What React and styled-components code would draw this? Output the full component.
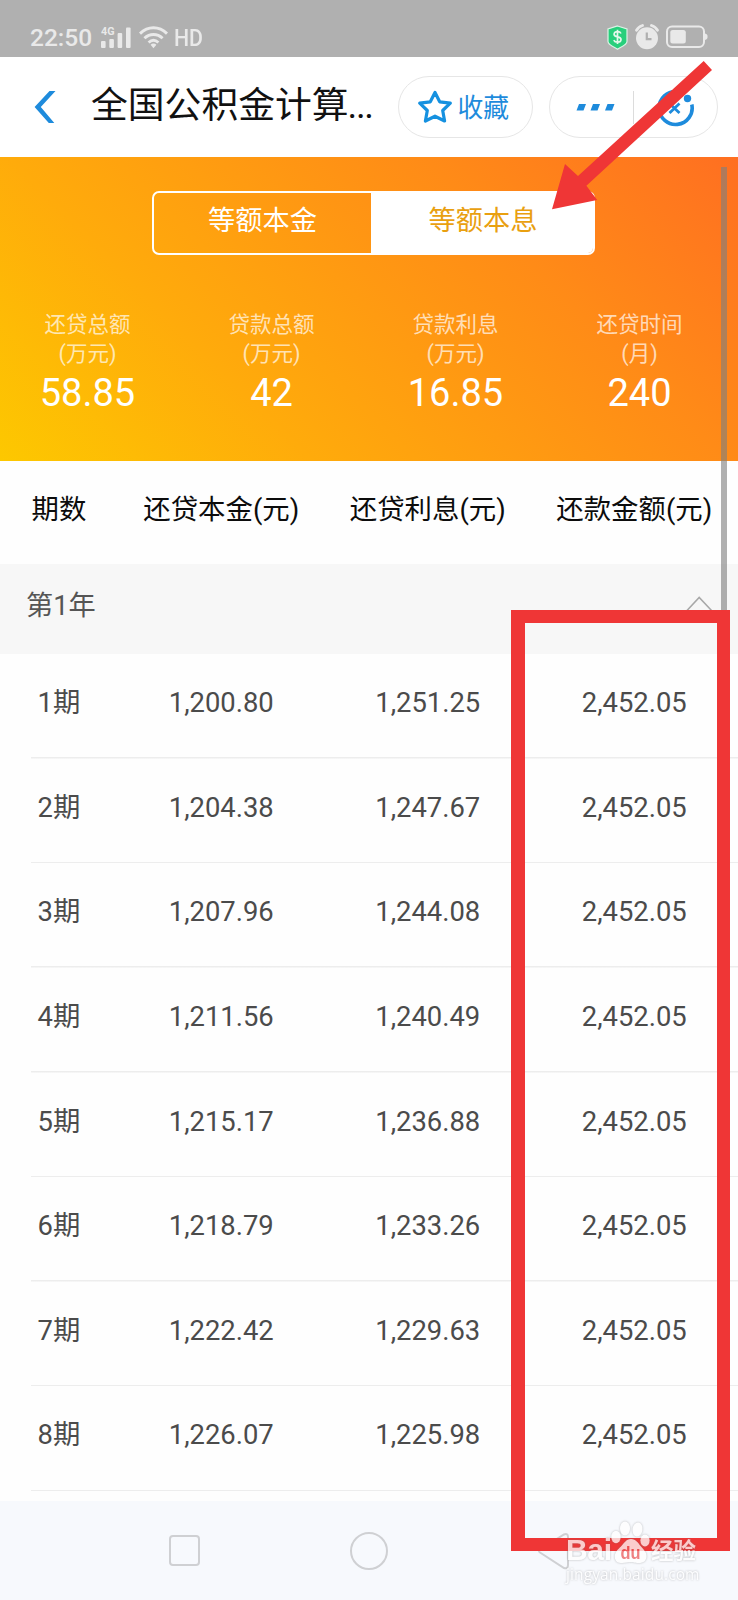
import React from "react";
import styled, { createGlobalStyle } from "styled-components";

const GlobalStyle = createGlobalStyle`
  * {
    box-sizing: border-box;
  }
  body {
    margin: 0;
    background: #fefefe;
    font-family: Roboto, "Noto Sans CJK SC", sans-serif;
  }
  svg {
    display: block;
    flex: none;
  }
`;

const Screen = styled.div`
  position: relative;
  display: flex;
  flex-direction: column;
  width: 738px;
  height: 1600px;
  overflow: hidden;
  background: #fefefe;
`;

const StatusBar = styled.div`
  display: flex;
  justify-content: space-between;
  height: 57px;
  padding: 20px 30px 0 30px;
  background: #b0b0b0;
  color: #e9e9e9;
`;

const StatusGroup = styled.div`
  display: flex;
  align-items: center;
  height: 34px;
  gap: ${(props) => props.$gap}px;
`;

const Clock = styled.span`
  padding-top: 2px;
  font-size: 24.5px;
  font-weight: 500;
  line-height: 34px;
  width: 63px;
  white-space: nowrap;
`;

const Network = styled.span`
  margin-left: -2px;
  padding-top: 2px;
  font-size: 24.5px;
  font-weight: 500;
  line-height: 34px;
  transform: scaleX(0.87);
  transform-origin: left;
`;

const NavBar = styled.div`
  display: flex;
  align-items: center;
  height: 100px;
  padding: 0 20px 0 32px;
  background: #fff;
`;

const Title = styled.h1`
  width: 308px;
  margin: 0 0 0 33px;
  padding-bottom: 2px;
  font-size: 36.8px;
  font-weight: 400;
  line-height: 50px;
  color: #111;
  white-space: nowrap;
`;

const Dots = styled.span`
  margin-left: -1px;
  letter-spacing: -1.4px;
`;

const Pill = styled.div`
  display: flex;
  align-items: center;
  width: ${(props) => props.$width}px;
  height: 62px;
  padding-left: ${(props) => props.$inset}px;
  border: 1px solid #e6e6e6;
  border-radius: 31px;
  background: #fff;
  color: #1e8bdc;
  font-size: 25.8px;
`;

const MenuPill = styled(Pill)`
  margin-left: 16px;
`;

const PillText = styled.span`
  margin: 2px 0 0 4px;
  line-height: 36px;
`;

const PillDivider = styled.span`
  width: 1px;
  height: 33px;
  margin: 0 23px 0 18px;
  background: #dcdcdc;
`;

const Summary = styled.section`
  height: 304px;
  padding-top: 34px;
  background: linear-gradient(45deg, #fdc800 0%, #ffab0b 30%, #ff8b17 70%, #ff6f21 100%);
`;

const Tabs = styled.div`
  display: flex;
  width: 442.5px;
  height: 63.5px;
  margin-left: 152px;
  border: 2px solid #fff;
  border-radius: 7px;
  overflow: hidden;
`;

const Tab = styled.div`
  flex: 1 0 ${(props) => (props.$active ? 222 : 217)}px;
  padding-left: ${(props) => (props.$active ? 2 : 0)}px;
  text-align: center;
  font-size: 27.2px;
  line-height: 57px;
  color: ${(props) => (props.$active ? "#e9a010" : "#fff")};
  background: ${(props) => (props.$active ? "#fff" : "transparent")};
`;

const Totals = styled.div`
  display: grid;
  grid-template-columns: repeat(4, 184px);
  margin: 55.5px 0 0 -4.5px;
  text-align: center;
`;

const TotalLabel = styled.div`
  font-size: 21.5px;
  line-height: 29px;
  color: rgba(255, 255, 255, 0.7);
`;

const TotalValue = styled.div`
  font-size: 38px;
  line-height: 51px;
  color: #fff;
`;

const Row = styled.div`
  display: grid;
  grid-template-columns: 118px repeat(3, 206.5px);
  text-align: center;
  font-size: 27.4px;
`;

const HeadRow = styled(Row)`
  height: 103px;
  line-height: 99px;
  color: #0c0c0c;
`;

const YearBar = styled.div`
  display: flex;
  justify-content: space-between;
  height: 90px;
  padding: 0 24px 0 26px;
  background: #f7f7f7;
  color: #555;
  font-size: 27.2px;
  line-height: 85px;
`;

const ChevronBox = styled.div`
  padding-top: 32px;
`;

const PeriodRow = styled(Row)`
  height: 104.64px;
  line-height: 98px;
  color: #4b4b4b;
  background: linear-gradient(#ededed, #ededed) 31px 100% / 100% 1.5px no-repeat;
`;

const List = styled.div`
  height: 847px;
  overflow: hidden;
`;

const SystemNav = styled.div`
  display: flex;
  align-items: center;
  flex: 1;
  padding: 0 0 0 169px;
  background: #f7f9fd;
`;

const NavSquare = styled.div`
  width: 31px;
  height: 31px;
  border: 2px solid #cfd0d3;
  border-radius: 4px;
`;

const NavCircle = styled.div`
  width: 38px;
  height: 38px;
  margin: 0 149px 0 150px;
  border: 2px solid #cfd0d3;
  border-radius: 50%;
`;

const Scrollbar = styled.div`
  position: absolute;
  left: 721px;
  top: 167px;
  width: 6px;
  height: 450px;
  background: rgba(127, 127, 127, 0.62);
`;

const Frame = styled.div`
  position: absolute;
  left: 511px;
  top: 610px;
  width: 219px;
  height: 941px;
  border: solid #ef3636;
  border-width: 13px 13px 13px 14px;
`;

const Arrow = styled.svg`
  position: absolute;
  left: 540px;
  top: 50px;
`;

const Watermark = styled.div`
  position: absolute;
  left: 566px;
  top: 1519px;
  color: #fff;
  opacity: 0.75;
  filter: drop-shadow(0 0 0.8px rgba(110, 110, 110, 0.6));
`;

const Brand = styled.div`
  display: flex;
  align-items: flex-end;
  height: 46px;
  font-family: "Liberation Sans", "Noto Sans CJK SC", sans-serif;
  font-weight: 700;
`;

const BrandLatin = styled.span`
  width: 45px;
  font-size: 30px;
  line-height: 30px;
  height: 30px;
  letter-spacing: -0.3px;
`;

const BrandHan = styled.span`
  margin-left: 1px;
  font-size: 22.5px;
  line-height: 26px;
`;

const Site = styled.div`
  font-family: "Open Sans", sans-serif;
  font-size: 15.5px;
  line-height: 18px;
  letter-spacing: 0.1px;
`;

const totals = [
  { label: "还贷总额", unit: "(万元)", value: "58.85" },
  { label: "贷款总额", unit: "(万元)", value: "42" },
  { label: "贷款利息", unit: "(万元)", value: "16.85" },
  { label: "还贷时间", unit: "(月)", value: "240" },
];

const periods = [
  ["1期", "1,200.80", "1,251.25", "2,452.05"],
  ["2期", "1,204.38", "1,247.67", "2,452.05"],
  ["3期", "1,207.96", "1,244.08", "2,452.05"],
  ["4期", "1,211.56", "1,240.49", "2,452.05"],
  ["5期", "1,215.17", "1,236.88", "2,452.05"],
  ["6期", "1,218.79", "1,233.26", "2,452.05"],
  ["7期", "1,222.42", "1,229.63", "2,452.05"],
  ["8期", "1,226.07", "1,225.98", "2,452.05"],
];

const SignalIcon = () => (
  <svg width="30" height="26" viewBox="0 -3 30 26" fill="currentColor">
    <text x="0" y="7.500" fontSize="10.500" fontWeight="700" textLength="13.500" lengthAdjust="spacingAndGlyphs">
      4G
    </text>
    <rect x="0" y="14" width="4.600" height="7" rx="1" />
    <rect x="8.300" y="12" width="4.600" height="9" rx="1" />
    <rect x="16.600" y="6" width="4.600" height="15" rx="1" />
    <rect x="25" y="0.500" width="4.600" height="20.500" rx="1" />
  </svg>
);

const WifiIcon = () => (
  <svg width="29" height="23" viewBox="0 0 29 23" fill="none" stroke="currentColor" strokeWidth="2.900">
    <path d="M1 7.600C9-.2 20-.2 28 7.600" />
    <path d="M5.400 12.200c5.400-5 12.800-5 18.200 0" />
    <path d="M9.600 16.500c3-2.700 6.800-2.700 9.800 0" />
    <path d="M11.600 18.800c1.600-1.600 4.200-1.600 5.800 0L14.500 22.300z" fill="currentColor" stroke="none" />
  </svg>
);

const ShieldIcon = () => (
  <svg width="21" height="25" viewBox="0 0 21 25">
    <path
      d="M10.500 1L20 4v12.500c0 3.500-6 5.500-9.500 7.700C7 22 1 20 1 16.500V4z"
      fill="#28cf7c"
      stroke="#dcf3e6"
      strokeWidth="1.200"
    />
    <path
      d="M14 8.500c-.6-1.300-1.800-1.900-3.500-1.900-2 0-3.400.9-3.400 2.600 0 3.800 6.900 1.700 6.900 5.300 0 1.800-1.500 2.700-3.500 2.700-1.800 0-3.100-.7-3.700-2.100M10.500 4.700v14.400"
      fill="none"
      stroke="#e4f8ec"
      strokeWidth="1.700"
    />
  </svg>
);

const AlarmIcon = () => (
  <svg width="24" height="26" viewBox="0 0 24 26" fill="none">
    <circle cx="12" cy="14.200" r="11" fill="currentColor" />
    <path d="M1.500 6.200C2.800 4 5 2.200 7.500 1.500M22.500 6.200C21.200 4 19 2.200 16.500 1.500" stroke="currentColor" strokeWidth="2.800" strokeLinecap="round" />
    <path d="M11.800 8.500v6.700h4.700" stroke="#b0b0b0" strokeWidth="2.200" />
  </svg>
);

const BatteryIcon = () => (
  <svg width="42" height="24" viewBox="0 0 42 24">
    <rect x="1" y="1.500" width="37" height="20.500" rx="5" fill="none" stroke="currentColor" strokeWidth="2" />
    <rect x="4.300" y="5" width="15.500" height="13.500" rx="2.500" fill="currentColor" />
    <path d="M39 8.500q3 1 2.500 3.200q.3 2.500-2.500 3.300z" fill="currentColor" />
  </svg>
);

const BackIcon = () => (
  <svg width="26" height="34" viewBox="0 0 26 34">
    <path d="M17.500 1H23.500L8.800 17 22.300 33H16.800L2.600 17z" fill="#1e8bdc" />
  </svg>
);

const StarIcon = () => (
  <svg width="36" height="34" viewBox="0 0 36 34">
    <path
      d="M18 2.500L22.700 11.800 33.300 13.200 25.700 20.500 27.600 31 18 26.200 8.400 31 10.300 20.500 2.700 13.200 13.300 11.800z"
      fill="none"
      stroke="#1591e0"
      strokeWidth="3.200"
      strokeLinejoin="round"
    />
  </svg>
);

const MoreIcon = () => (
  <svg width="39" height="7" viewBox="0 0 39 7" fill="#1e8bdc">
    <path d="M3 0H10L7.500 6.500H.5zM17 0h7l-2.500 6.500h-7zM31.500 0h7L36 6.500h-7z" />
  </svg>
);

const FaceIcon = () => (
  <svg width="38" height="40" viewBox="0 0 38 40" fill="none" stroke="#1e8bdc">
    <path d="M20 4.500A16.500 16.500 0 1 0 34.800 17.500" strokeWidth="3.600" />
    <circle cx="30.500" cy="11.500" r="3.700" fill="#1e8bdc" stroke="none" />
    <path d="M12.500 16.500L22.500 26M22.500 16.500L12.500 26" strokeWidth="2.800" />
  </svg>
);

const ChevronUp = () => (
  <svg width="28" height="16" viewBox="0 0 28 16" fill="none">
    <path d="M1 14.500L13.200 1.500 25.500 14.500" stroke="#a8a8a8" strokeWidth="1.600" />
  </svg>
);

const NavTriangle = () => (
  <svg width="34" height="38" viewBox="0 0 34 38" fill="none">
    <path d="M3 17.500Q1 19 3 20.500L27 36Q31 37 31 33V5Q31 1 27 2.500z" stroke="#cfd0d3" strokeWidth="2" />
  </svg>
);

const PawIcon = () => (
  <svg width="39" height="44" viewBox="0 0 39 44" fill="currentColor">
    <ellipse cx="5" cy="16" rx="4.700" ry="6.200" />
    <ellipse cx="14" cy="7.500" rx="5" ry="7" />
    <ellipse cx="26.500" cy="8.500" rx="5" ry="7" transform="rotate(8 26.500 8.500)" />
    <ellipse cx="34" cy="19.500" rx="4.600" ry="6" />
    <path d="M20 18c5 0 7 4 10 7.500s6 6 5.500 10.500-4 6-8 6-5-1-8-1-5 1-8.500 1S4 41 3.800 36 7 28.500 10 25.500s5-7.500 10-7.500z" />
    <text x="9.500" y="38" fontSize="19" fontWeight="700" fill="#ec5a5a" textLength="20" lengthAdjust="spacingAndGlyphs">
      du
    </text>
  </svg>
);

export default function App() {
  return (
    <>
      <GlobalStyle />
      <Screen>
        <StatusBar>
          <StatusGroup $gap={8}>
            <Clock>22:50</Clock>
            <SignalIcon />
            <WifiIcon />
            <Network>HD</Network>
          </StatusGroup>
          <StatusGroup $gap={7}>
            <ShieldIcon />
            <AlarmIcon />
            <BatteryIcon />
          </StatusGroup>
        </StatusBar>

        <NavBar>
          <BackIcon />
          <Title>
            全国公积金计算<Dots>...</Dots>
          </Title>
          <Pill $width={135} $inset={18}>
            <StarIcon />
            <PillText>收藏</PillText>
          </Pill>
          <MenuPill $width={169} $inset={26}>
            <MoreIcon />
            <PillDivider />
            <FaceIcon />
          </MenuPill>
        </NavBar>

        <Summary>
          <Tabs>
            <Tab>等额本金</Tab>
            <Tab $active>等额本息</Tab>
          </Tabs>
          <Totals>
            {totals.map((item) => (
              <div key={item.label}>
                <TotalLabel>{item.label}</TotalLabel>
                <TotalLabel>{item.unit}</TotalLabel>
                <TotalValue>{item.value}</TotalValue>
              </div>
            ))}
          </Totals>
        </Summary>

        <HeadRow>
          <span>期数</span>
          <span>还贷本金(元)</span>
          <span>还贷利息(元)</span>
          <span>还款金额(元)</span>
        </HeadRow>
        <YearBar>
          <span>第1年</span>
          <ChevronBox>
            <ChevronUp />
          </ChevronBox>
        </YearBar>
        <List>
          {periods.map((period) => (
            <PeriodRow key={period[0]}>
              {period.map((cell, i) => (
                <span key={i}>{cell}</span>
              ))}
            </PeriodRow>
          ))}
        </List>

        <SystemNav>
          <NavSquare />
          <NavCircle />
          <NavTriangle />
        </SystemNav>

        <Scrollbar />
        <Frame />
        <Arrow width="180" height="170" viewBox="540 50 180 170">
          <path d="M703.700 61L712 70 586.400 185.700 597.200 200 552 209.300 565 164 578 176z" fill="#ef3636" />
        </Arrow>
        <Watermark>
          <Brand>
            <BrandLatin>Bai</BrandLatin>
            <PawIcon />
            <BrandHan>经验</BrandHan>
          </Brand>
          <Site>jingyan.baidu.com</Site>
        </Watermark>
      </Screen>
    </>
  );
}
